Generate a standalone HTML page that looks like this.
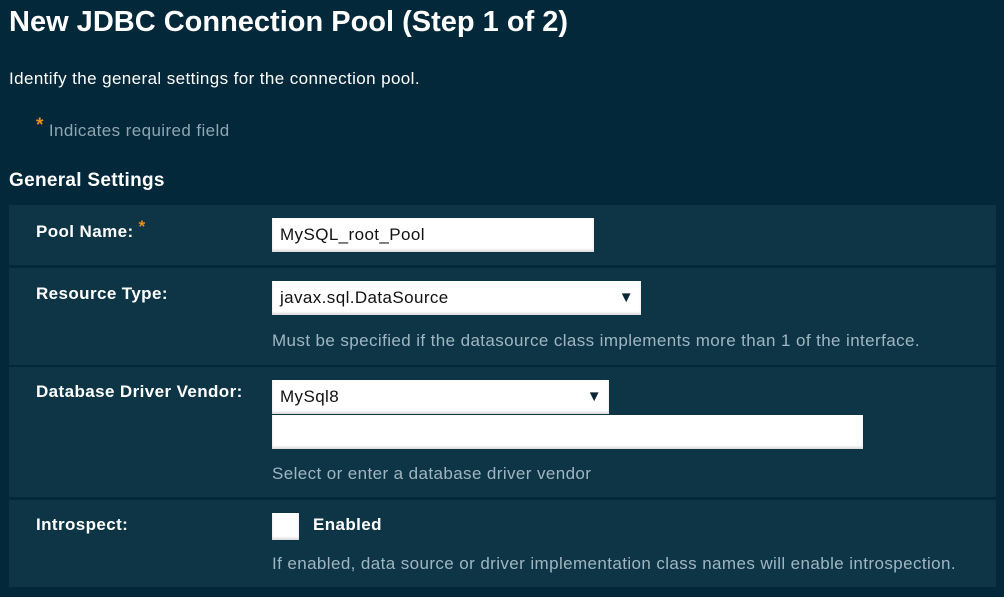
<!DOCTYPE html>
<html><head><meta charset="utf-8"><style>
*{margin:0;padding:0;box-sizing:border-box}
body{width:1004px;height:597px;background:#03283a;font-family:"Liberation Sans",Arial,sans-serif;position:relative;overflow:hidden;color:#fff}
.a{position:absolute;white-space:nowrap}
.row{position:absolute;left:9px;width:987px;background:#0e3546}
.lab{font-weight:bold;font-size:17px;letter-spacing:0.4px;color:#fff;left:36px}
.help{font-size:17px;letter-spacing:0.4px;color:#9fb6c2;left:272px}
.box{position:absolute;background:#fff;box-shadow:inset 0 -2px 2px rgba(0,0,0,.15);color:#111;font-size:17px;letter-spacing:0.4px;padding-left:8px;line-height:34px}
.arr{position:absolute;right:7px;top:0;font-size:15px;color:#0b2535}
.star{color:#e8901c;font-weight:bold}
</style></head><body>
<div class="a" style="left:9px;top:6px;font-size:29px;font-weight:bold">New JDBC Connection Pool (Step 1 of 2)</div>
<div class="a" style="left:9px;top:69px;font-size:17px;letter-spacing:0.4px">Identify the general settings for the connection pool.</div>
<div class="a" style="left:36px;top:120px;font-size:17px;letter-spacing:0.4px;color:#8fa6b2"><span class="star" style="font-size:19px;position:relative;top:-5px">*</span> Indicates required field</div>
<div class="a" style="left:9px;top:170px;font-size:19px;font-weight:bold;letter-spacing:0.3px">General Settings</div>

<div class="row" style="top:205px;height:60px"></div>
<div class="row" style="top:268px;height:97px"></div>
<div class="row" style="top:367px;height:130px"></div>
<div class="row" style="top:500px;height:87px"></div>

<div class="a lab" style="top:222px">Pool Name: <span class="star" style="position:relative;top:-5px">*</span></div>
<div class="box" style="left:272px;top:218px;width:322px;height:34px">MySQL_root_Pool</div>

<div class="a lab" style="top:284px">Resource Type:</div>
<div class="box" style="left:272px;top:281px;width:369px;height:34px">javax.sql.DataSource<span class="arr">▼</span></div>
<div class="a help" style="top:331px">Must be specified if the datasource class implements more than 1 of the interface.</div>

<div class="a lab" style="top:382px">Database Driver Vendor:</div>
<div class="box" style="left:272px;top:380px;width:337px;height:34px">MySql8<span class="arr">▼</span></div>
<div class="box" style="left:272px;top:415px;width:591px;height:34px"></div>
<div class="a help" style="top:464px">Select or enter a database driver vendor</div>

<div class="a lab" style="top:515px">Introspect:</div>
<div class="box" style="left:272px;top:513px;width:27px;height:27px;padding:0"></div>
<div class="a" style="left:313px;top:515px;font-size:17px;letter-spacing:0.4px;font-weight:bold">Enabled</div>
<div class="a help" style="top:554px">If enabled, data source or driver implementation class names will enable introspection.</div>
</body></html>
